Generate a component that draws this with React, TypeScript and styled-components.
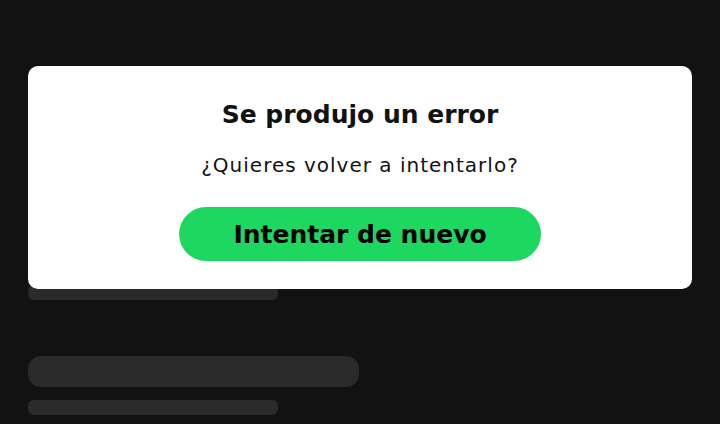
import React from "react";
import styled, { createGlobalStyle } from "styled-components";

const GlobalStyle = createGlobalStyle`
  html, body {
    margin: 0;
    padding: 0;
    background: #121212;
  }
  body {
    font-family: "DejaVu Sans", Inter, "Liberation Sans", sans-serif;
  }
`;

const Page = styled.div`
  position: relative;
  width: 720px;
  height: 424px;
  overflow: hidden;
  background: #121212;
`;

const SkeletonList = styled.div`
  display: flex;
  flex-direction: column;
  padding: 126px 28px 0;
`;

const SkeletonGroup = styled.div`
  display: flex;
  flex-direction: column;
  gap: 13px;
  margin-bottom: 56px;
`;

const SkeletonBar = styled.div<{ $width: number; $height: number }>`
  width: ${({ $width }) => $width}px;
  height: ${({ $height }) => $height}px;
  border-radius: ${({ $height }) => Math.round($height / 2.4)}px;
  background: #2a2a2a;
`;

const Dialog = styled.div`
  position: absolute;
  top: 66px;
  left: 28px;
  width: 664px;
  height: 223px;
  box-sizing: border-box;
  background: #ffffff;
  border-radius: 10px;
  display: flex;
  flex-direction: column;
  align-items: center;
  padding-top: 30px;
`;

const Title = styled.h1`
  margin: 0;
  font-size: 25px;
  line-height: 38px;
  font-weight: 700;
  color: #121212;
  letter-spacing: 0px;
`;

const Message = styled.p`
  margin: 18px 0 0;
  font-size: 20px;
  line-height: 26px;
  font-weight: 400;
  color: #121212;
  letter-spacing: 1px;
`;

const RetryButton = styled.button`
  margin-top: 29px;
  width: 362px;
  height: 54px;
  border: none;
  border-radius: 27px;
  background: #1ed760;
  color: #000000;
  font-family: inherit;
  font-size: 25px;
  font-weight: 700;
  letter-spacing: 0px;
  cursor: pointer;
`;

const groups = [0, 1, 2];

export default function App() {
  return (
    <Page>
      <GlobalStyle />
      <SkeletonList>
        {groups.map((g) => (
          <SkeletonGroup key={g}>
            <SkeletonBar $width={331} $height={31} />
            <SkeletonBar $width={250} $height={15} />
          </SkeletonGroup>
        ))}
      </SkeletonList>
      <Dialog role="alertdialog">
        <Title>Se produjo un error</Title>
        <Message>¿Quieres volver a intentarlo?</Message>
        <RetryButton>Intentar de nuevo</RetryButton>
      </Dialog>
    </Page>
  );
}
